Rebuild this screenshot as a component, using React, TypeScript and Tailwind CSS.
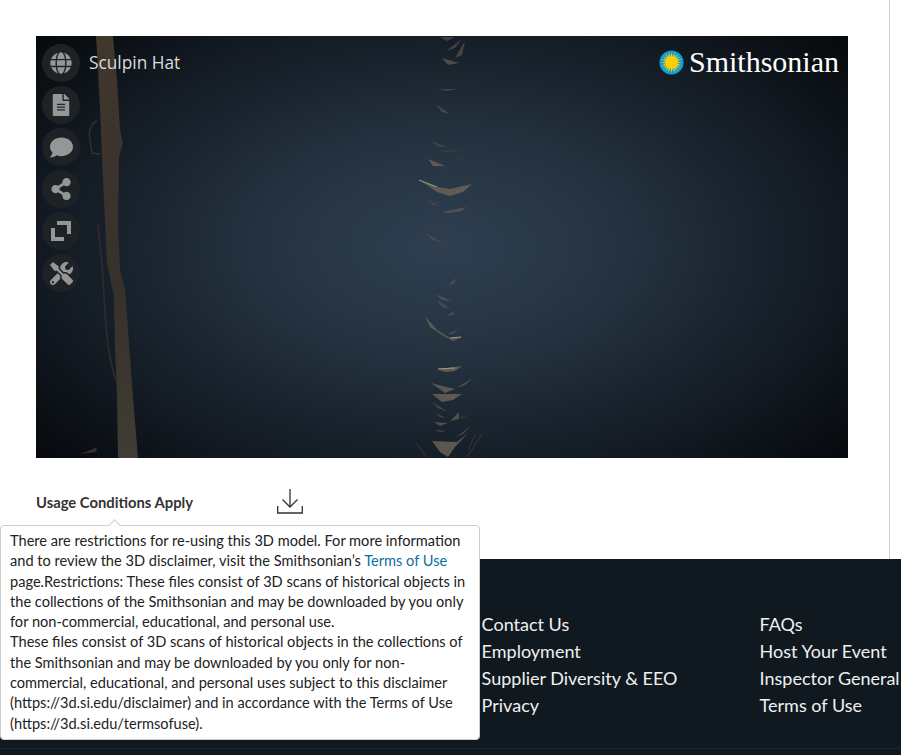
import { FaComment, FaFileAlt, FaGlobe, FaShareAlt, FaTools } from "react-icons/fa";

// [points, opacity]
const shards: [string, number][] = [
  ["440,37 455,37 447,41", 0.45],
  ["446,51 462,39 455,48", 0.5],
  ["455,58 465,41 462,55", 0.55],
  ["442,58 459,63 448,65", 0.6],
  ["438,89 457,89 447,91", 0.45],
  ["435,104 450,114 442,112", 0.5],
  ["431,141 447,147 438,147", 0.35],
  ["437,151 462,150 447,152", 0.3],
  ["428,159 445,166 433,166", 0.8],
  ["457,161 463,157 460,161", 0.25],
  ["419,180 437,187 450,189 472,184 463,192 450,196 437,192 427,185", 0.8],
  ["428,200 440,206 433,205", 0.35],
  ["442,212 466,207 462,211 450,213", 0.55],
  ["427,234 443,243 433,240", 0.45],
  ["448,285 458,277 453,284", 0.5],
  ["435,294 452,301 442,300", 0.5],
  ["437,300 450,309 442,307", 0.45],
  ["446,316 455,311 453,315", 0.55],
  ["425,316 437,330 450,338 462,337 453,341 442,335 430,327", 0.75],
  ["447,334 459,329 453,334", 0.45],
  ["437,369 462,366 455,371 445,372", 0.8],
  ["431,383 455,389 445,393", 0.75],
  ["456,388 473,378 465,385", 0.65],
  ["432,394 462,394 453,400 442,402", 0.8],
  ["432,402 448,412 438,408", 0.55],
  ["436,413 446,418 440,417", 0.5],
  ["450,421 459,412 459,419", 0.65],
  ["459,418 470,414 463,418", 0.35],
  ["434,422 448,423 440,426", 0.65],
  ["434,430 447,431 440,432", 0.55],
  ["456,437 471,426 463,434", 0.55],
  ["432,441 457,442 468,433 455,447 448,457 440,452", 0.8],
];

const tools = [
  { id: "globe", icon: <FaGlobe size={22} /> },
  { id: "file", icon: <FaFileAlt size={22} /> },
  { id: "comment", icon: <FaComment size={23} /> },
  { id: "share", icon: <FaShareAlt size={22} /> },
  {
    id: "expand",
    icon: (
      <svg width="20" height="20" viewBox="0 0 20 20" fill="currentColor">
        <path d="M6 0h14v13h-4V4H6zM0 7h4v9h9v4H0z" />
      </svg>
    ),
  },
  { id: "tools", icon: <FaTools size={23} /> },
];

function Sun() {
  const rays = Array.from({ length: 20 }, (_, i) => (i * 360) / 20);
  return (
    <svg width="25" height="25" viewBox="0 0 26 26" className="shrink-0">
      <circle cx="13" cy="13" r="12.5" fill="#0e9ed8" />
      <circle cx="13" cy="13" r="6" fill="#ffcf06" />
      {rays.map((a) => (
        <polygon key={a} points="11.6,9 14.4,9 13,2.2" fill="#ffcf06" transform={`rotate(${a} 13 13)`} />
      ))}
    </svg>
  );
}

function Viewer() {
  return (
    <div className="relative w-[812px] h-[422px] overflow-hidden bg-[radial-gradient(ellipse_58%_66%_at_50%_50%,#2f3f50_0%,#263442_35%,#17202a_72%,#06090c_115%)]">
      <svg className="absolute inset-0 blur-[0.4px]" width="812" height="422" viewBox="36 36 812 422">
        <defs>
          <linearGradient id="strand" x1="0" y1="0" x2="0" y2="1">
            <stop offset="0" stopColor="#40372d" />
            <stop offset="0.6" stopColor="#37312b" />
            <stop offset="1" stopColor="#403b35" />
          </linearGradient>
        </defs>
        <path
          d="M96 36 L98 70 L100 107 L103 180 L107 263 L114 297 L115 347 L117 397 L118 458 L138 458 L133 397 L128 330 L125 290 L120 270 L118 230 L119 157 L123 143 L120 130 L117 80 L113 36 Z"
          fill="url(#strand)"
        />
        <path d="M97 120 Q87 128 90 140 Q91 148 92 153 L100 154" fill="none" stroke="#35312c" strokeWidth="1.4" />
        <path d="M98 225 Q100 245 102 263 L105 313 Q108 360 117 383" fill="none" stroke="#312e2a" strokeWidth="1.5" />
        <path d="M81 454 L97 447 L96 452 Z" fill="#332e29" />
        {shards.map(([p, o]) => (
          <polygon key={p} points={p} fill="#6e6558" fillOpacity={o} />
        ))}
        <path d="M419 180 L437 187 M450 338 L461 337 M438 369 L455 368" stroke="#a39a84" strokeWidth="1" />
        <path d="M416 443 L427 457 M467 457 L482 434 M468 450 L475 435" stroke="#3c3833" strokeWidth="1" />
      </svg>
      <div className="absolute inset-0 flex items-start pl-[6px] pr-[9px] pt-[8px]">
        <div className="flex flex-col gap-[4px]">
          {tools.map((t) => (
            <div
              key={t.id}
              className="w-[38px] h-[38px] rounded-full bg-[#1d2227] text-[#969696] flex items-center justify-center"
            >
              {t.icon}
            </div>
          ))}
        </div>
        <div className="ml-[9px] mt-[6px] text-[17.300px] leading-[26px] text-[#dcdcdc] font-['Open_Sans',sans-serif]">
          Sculpin Hat
        </div>
        <div className="ml-auto mt-[1px] flex items-center gap-[5px]">
          <Sun />
          <span className="text-[30px] leading-[34px] text-white font-['Liberation_Serif',serif]">Smithsonian</span>
        </div>
      </div>
    </div>
  );
}

export default function App() {
  return (
    <div className="relative w-[901px] h-[755px] overflow-hidden bg-white font-['Lato',sans-serif]">
      <div className="w-[890px] h-[559px] border-r border-[#cfcfd4] pt-[36px] pl-[36px]">
        <Viewer />
        <div className="mt-[30px] flex items-start w-[267px] justify-between">
          <span className="mt-[1px] text-[14.800px] leading-[26px] font-bold text-[#333]">Usage Conditions Apply</span>
          <svg width="26" height="26" viewBox="0 0 26 26" fill="none" stroke="#333" strokeWidth="1.3">
            <path d="M13 1v18M5.500 11.500 13 19l7.500-7.500M0.700 18v7h24.600v-7" />
          </svg>
        </div>
      </div>

      <footer className="h-[196px] bg-[#101820] text-[18px] leading-[27px] text-[#f0f0f0]">
        <div className="h-[190px] border-b border-[#1a2531] pt-[52px] pl-[481.600px] flex">
          <ul className="w-[278px]">
            <li>Contact Us</li>
            <li>Employment</li>
            <li>Supplier Diversity &amp; EEO</li>
            <li>Privacy</li>
          </ul>
          <ul className="whitespace-nowrap">
            <li>FAQs</li>
            <li>Host Your Event</li>
            <li>Inspector General</li>
            <li>Terms of Use</li>
          </ul>
        </div>
      </footer>

      <div className="absolute left-0 top-[525px] w-[480px] h-[215px] bg-white border border-[#ccc] rounded-[4px] pt-[5px] pl-[9px] pr-[8px] text-[14.600px] leading-[20.300px] text-[#222]">
        <span className="absolute left-[109px] -top-[5px] w-[9px] h-[9px] rotate-45 bg-white border-l border-t border-[#ccc]" />
        <p>
          There are restrictions for re-using this 3D model. For more information and to review the 3D disclaimer, visit
          the Smithsonian’s <a className="text-[#0b6fa8]">Terms of Use</a> page.Restrictions: These files consist of 3D
          scans of historical objects in the collections of the Smithsonian and may be downloaded by you only for
          non-commercial, educational, and personal use.
        </p>
        <p>
          These files consist of 3D scans of historical objects in the collections of the Smithsonian and may be
          downloaded by you only for non-commercial, educational, and personal uses subject to this disclaimer
          (https://3d.si.edu/disclaimer) and in accordance with the Terms of Use (https://3d.si.edu/termsofuse).
        </p>
      </div>
    </div>
  );
}
